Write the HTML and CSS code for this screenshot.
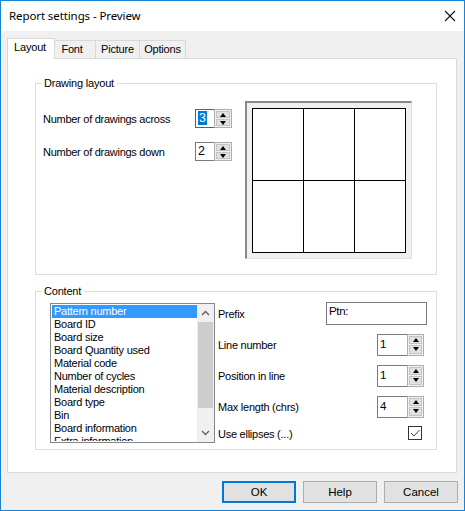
FILE: index.html
```html
<!DOCTYPE html>
<html>
<head>
<meta charset="utf-8">
<link rel="stylesheet" href="styles.css">
</head>
<body>
<div class="window">
  <div class="titlebar">
    <span class="title">Report settings - Preview</span>
    <svg class="close" width="12" height="12" viewBox="0 0 12 12"><path d="M1 1 L11 11 M11 1 L1 11" stroke="#111" stroke-width="1.1" fill="none"/></svg>
  </div>
  <div class="main">
    <div class="tabs">
      <div class="tab active">Layout</div>
      <div class="tab t-font">Font</div>
      <div class="tab t-pic">Picture</div>
      <div class="tab t-opt">Options</div>
    </div>
    <div class="panel">
      <div class="group g1">
        <span class="legend">Drawing layout</span>
        <div class="g1-left">
          <div class="row r1">
            <span class="lbl">Number of drawings across</span>
            <div class="spin small">
              <div class="spin-input focus"><span class="sel">3</span></div>
              <div class="spin-btns">
                <div class="sb"><span class="tri up"></span></div>
                <div class="sb"><span class="tri down"></span></div>
              </div>
            </div>
          </div>
          <div class="row r2">
            <span class="lbl">Number of drawings down</span>
            <div class="spin small">
              <div class="spin-input"><span class="val">2</span></div>
              <div class="spin-btns">
                <div class="sb"><span class="tri up"></span></div>
                <div class="sb"><span class="tri down"></span></div>
              </div>
            </div>
          </div>
        </div>
        <div class="preview">
          <div class="grid">
            <div class="cell"></div><div class="cell"></div><div class="cell"></div>
            <div class="cell"></div><div class="cell"></div><div class="cell"></div>
          </div>
        </div>
      </div>
      <div class="group g2">
        <span class="legend">Content</span>
        <div class="listbox">
          <div class="items">
            <div class="item selected">Pattern number</div>
            <div class="item">Board ID</div>
            <div class="item">Board size</div>
            <div class="item">Board Quantity used</div>
            <div class="item">Material code</div>
            <div class="item">Number of cycles</div>
            <div class="item">Material description</div>
            <div class="item">Board type</div>
            <div class="item">Bin</div>
            <div class="item">Board information</div>
            <div class="item">Extra information</div>
          </div>
          <div class="scrollbar">
            <svg class="chev" width="15" height="16" viewBox="0 0 15 16"><path d="M4 10 L7.5 6.5 L11 10" stroke="#606060" stroke-width="1.3" fill="none"/></svg>
            <div class="thumb"></div>
            <svg class="chev" width="15" height="16" viewBox="0 0 15 16"><path d="M4 6 L7.5 9.5 L11 6" stroke="#606060" stroke-width="1.3" fill="none"/></svg>
          </div>
        </div>
        <div class="props">
          <div class="prow">
            <span class="plbl">Prefix</span>
            <div class="textbox">Ptn:</div>
          </div>
          <div class="prow">
            <span class="plbl">Line number</span>
            <div class="spin big">
              <div class="spin-input"><span class="val">1</span></div>
              <div class="spin-btns">
                <div class="sb"><span class="tri up"></span></div>
                <div class="sb"><span class="tri down"></span></div>
              </div>
            </div>
          </div>
          <div class="prow">
            <span class="plbl">Position in line</span>
            <div class="spin big">
              <div class="spin-input"><span class="val">1</span></div>
              <div class="spin-btns">
                <div class="sb"><span class="tri up"></span></div>
                <div class="sb"><span class="tri down"></span></div>
              </div>
            </div>
          </div>
          <div class="prow">
            <span class="plbl">Max length (chrs)</span>
            <div class="spin big">
              <div class="spin-input"><span class="val">4</span></div>
              <div class="spin-btns">
                <div class="sb"><span class="tri up"></span></div>
                <div class="sb"><span class="tri down"></span></div>
              </div>
            </div>
          </div>
          <div class="prow last">
            <span class="plbl">Use ellipses (...)</span>
            <div class="checkbox">
              <svg width="12" height="12" viewBox="0 0 12 12"><path d="M2 6 L5 9 L10.5 3" stroke="#444" stroke-width="1" fill="none"/></svg>
            </div>
          </div>
        </div>
      </div>
    </div>
    <div class="buttons">
      <div class="btn default">OK</div>
      <div class="btn">Help</div>
      <div class="btn">Cancel</div>
    </div>
  </div>
</div>
</body>
</html>
```
FILE: styles.css
```css
* { box-sizing: border-box; }
html, body { margin: 0; padding: 0; }
body {
  font-family: "Liberation Sans", Arial, sans-serif;
  font-size: 11px;
  color: #000;
}
.window {
  width: 465px;
  height: 511px;
  border: 1px solid #1883d7;
  background: #f0f0f0;
  overflow: hidden;
}
.titlebar {
  height: 30px;
  background: #fff;
  display: flex;
  align-items: center;
  justify-content: space-between;
  padding: 0 8px 0 8px;
}
.title {
  font-family: "Noto Sans", sans-serif;
  font-size: 11.5px;
  letter-spacing: -0.1px;
  margin-top: -1px;
}
.close { margin-right: 0; margin-top: -1px; }
.main {
  padding: 7px 7px 0 6px;
}
.tabs {
  display: flex;
  align-items: flex-end;
  height: 20px;
  position: relative;
  z-index: 1;
}
.tab {
  height: 18px;
  border-top: 1px solid #d9d9d9;
  border-right: 1px solid #d9d9d9;
  background: #f0f0f0;
  text-align: center;
  line-height: 17px;
  letter-spacing: -0.2px;
}
.tab.active {
  height: 21px;
  margin-bottom: -1px;
  width: 48px;
  border-left: 1px solid #d9d9d9;
  background: #fff;
  line-height: 17px;
  padding-right: 2px;
}
.t-font { width: 41px; padding-right: 6px; }
.t-pic { width: 44px; }
.t-opt { width: 46px; }
.panel {
  width: 450px;
  height: 415px;
  background: #fff;
  border: 1px solid #d9d9d9;
  padding: 24px 0 0 27px;
}
.group {
  position: relative;
  width: 402px;
  border: 1px solid #dcdcdc;
}
.legend {
  position: absolute;
  left: 6px;
  top: -8px;
  background: #fff;
  padding: 0 3px 0 2px;
  line-height: 14px;
  letter-spacing: -0.2px;
}
.g1 {
  height: 192px;
  display: flex;
}
.g1-left {
  padding: 25px 0 0 7px;
  width: 196px;
}
.row {
  display: flex;
  align-items: center;
  height: 19px;
}
.row.r2 { margin-top: 14px; }
.lbl {
  width: 152px;
  letter-spacing: -0.27px;
  padding-top: 1px;
}
.spin { display: flex; }
.spin.small { height: 19px; }
.spin.small .spin-input { width: 19px; }
.spin.small .spin-btns { width: 18px; }
.spin.big { height: 22px; }
.spin.big .spin-input { width: 30px; }
.spin.big .spin-btns { width: 17px; }
.spin-input {
  height: 100%;
  border: 1px solid #7a7a7a;
  border-right: none;
  background: #fff;
  padding: 1px 0 0 2px;
}
.spin-input.focus { border-color: #0078d7; }
.small .spin-input { font-size: 12.5px; line-height: 14px; }
.big .spin-input { font-size: 11.5px; line-height: 14px; padding-top: 2px; }
.sel {
  display: inline-block;
  background: #0078d7;
  color: #fff;
  padding: 0 1px;
  line-height: 14px;
}
.spin-btns {
  height: 100%;
  border: 1px solid #adadad;
  display: flex;
  flex-direction: column;
  padding: 1px;
  gap: 1px;
  background: #f0f0f0;
}
.sb {
  flex: 1;
  background: #e1e1e1;
  border: 1px solid #c4c4c4;
  display: flex;
  align-items: center;
  justify-content: center;
}
.tri {
  width: 0;
  height: 0;
  border-left: 3.5px solid transparent;
  border-right: 3.5px solid transparent;
}
.tri.up { border-bottom: 4px solid #000; }
.tri.down { border-top: 4px solid #000; }
.preview {
  margin: 17px 0 0 13px;
  width: 167px;
  height: 158px;
  background: #f0f0f0;
  border-top: 2px solid #888;
  border-left: 2px solid #888;
  border-right: 1px solid #e3e3e3;
  border-bottom: 1px solid #e3e3e3;
  padding: 5px;
}
.grid {
  width: 154px;
  height: 145px;
  background: #000;
  padding: 1px;
  display: grid;
  grid-template-columns: 50px 50px 50px;
  grid-template-rows: 71px 71px;
  gap: 1px;
}
.cell { background: #fff; }
.g2 {
  margin-top: 16px;
  height: 159px;
  display: flex;
  align-items: flex-start;
}
.listbox {
  margin: 11px 0 0 14px;
  width: 165px;
  height: 140px;
  border: 1px solid #828790;
  display: flex;
  padding: 1px 0 1px 1px;
  background: #fff;
}
.items {
  flex: 1;
  overflow: hidden;
}
.item {
  height: 13px;
  line-height: 13px;
  padding-left: 2px;
  white-space: nowrap;
  letter-spacing: -0.25px;
}
.item.selected {
  background: #3399ff;
  color: #fff;
}
.scrollbar {
  width: 17px;
  margin-top: -1px;
  margin-bottom: -1px;
  background: #f0f0f0;
  display: flex;
  flex-direction: column;
  align-items: center;
}
.chev { display: block; flex: none; margin-top: 1px; }
.thumb {
  width: 15px;
  height: 86px;
  background: #cdcdcd;
  margin-top: 1px;
  margin-bottom: auto;
}
.scrollbar .chev:last-child { margin-bottom: 1px; }
.props {
  margin: 10px 0 0 3px;
  width: 209px;
}
.prow {
  display: flex;
  align-items: center;
  justify-content: space-between;
  height: 23px;
  margin-bottom: 8px;
}
.prow.last { height: 14px; margin-top: 1px; }
.plbl { letter-spacing: -0.25px; padding-top: 1px; }
.textbox {
  width: 101px;
  height: 23px;
  border: 1px solid #7a7a7a;
  padding: 1px 0 0 2px;
  font-size: 11.5px;
  line-height: 14px;
  letter-spacing: -0.3px;
}
.prow .spin { margin-right: 3px; }
.checkbox {
  width: 14px;
  height: 14px;
  border: 1px solid #333;
  margin-right: 5px;
  background: #fff;
}
.checkbox svg { display: block; }
.buttons {
  display: flex;
  justify-content: flex-end;
  gap: 7px;
  margin-top: 8px;
  margin-right: -1px;
}
.btn {
  width: 74px;
  height: 22px;
  background: #e1e1e1;
  border: 1px solid #adadad;
  text-align: center;
  line-height: 20px;
  font-size: 11.5px;
}
.btn.default {
  border: 2px solid #0078d7;
  line-height: 18px;
}
```
